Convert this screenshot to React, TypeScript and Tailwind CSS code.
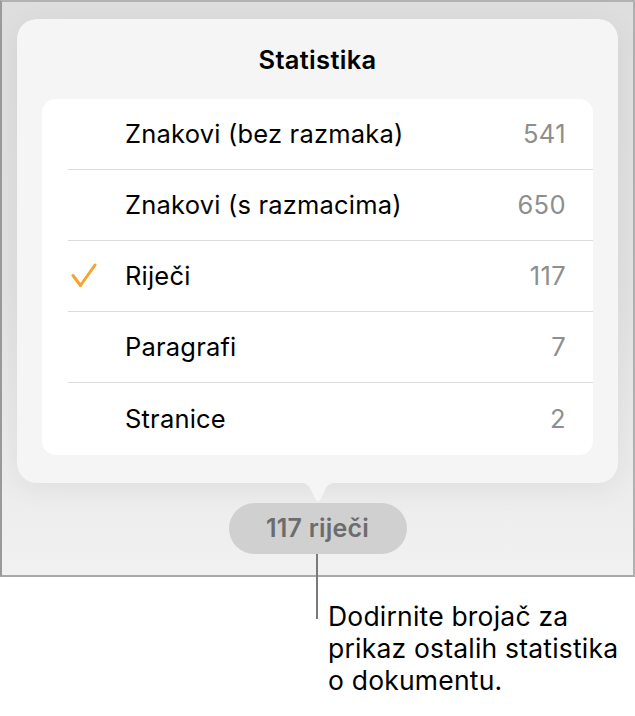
import React from 'react';

const rows = [
  { label: 'Znakovi (bez razmaka)', value: '541', checked: false },
  { label: 'Znakovi (s razmacima)', value: '650', checked: false },
  { label: 'Riječi', value: '117', checked: true },
  { label: 'Paragrafi', value: '7', checked: false },
  { label: 'Stranice', value: '2', checked: false },
];

function Check() {
  return (
    <svg width="28" height="26" viewBox="0 0 28 26" className="block">
      <path
        d="M3 12.5 L10.5 22.5 L25 2"
        fill="none"
        stroke="#f5a332"
        strokeWidth="3"
        strokeLinecap="round"
        strokeLinejoin="round"
      />
    </svg>
  );
}

export default function App() {
  return (
    <div className="relative w-[635px] h-[716px] bg-white font-['Inter','Liberation_Sans',sans-serif] text-black">
      {/* device frame */}
      <div className="w-[635px] h-[577px] border-t-2 border-t-[#b2b2b2] border-l-2 border-l-[#9a9a9a] border-r-2 border-r-[#b0b0b0] border-b-2 border-b-[#a8a8a8] bg-gradient-to-b from-[#dedede] via-[#e2e2e2] to-[#f1f1f1] flex flex-col items-center pt-[17px]">
        <div className="w-[601px] bg-[#f5f5f5] rounded-[20px] shadow-[0_6px_30px_rgba(0,0,0,0.06)] px-[25px] pt-[25px] pb-[28px] flex flex-col items-center">
          <div className="h-[32px] leading-[32px] text-[25.5px] font-semibold tracking-[0.3px]">Statistika</div>
          <div className="mt-[23px] w-full bg-white rounded-[14px] pl-[26px]">
            {rows.map((r, i) => (
              <div
                key={r.label}
                className={
                  'flex items-center pr-[27px] ' +
                  (i === 4 ? 'h-[72px]' : 'h-[71px] border-b border-[#dcdcdc]')
                }
              >
                <div className="w-[57px] pl-[2px]">{r.checked ? <Check /> : null}</div>
                <span className="flex-1 text-[25.5px] tracking-[0.2px]">{r.label}</span>
                <span className="text-[25.5px] tracking-[0.4px] text-[#8e8e8e]">{r.value}</span>
              </div>
            ))}
          </div>
        </div>
        {/* popover arrow */}
        <svg width="50" height="21" viewBox="0 0 50 21" className="block -mt-[1px]">
          <path d="M0 0 C11 0 13 1 17 6 L22.5 17.5 Q25 21 27.5 17.5 L33 6 C37 1 39 0 50 0 Z" fill="#f5f5f5" />
        </svg>
        <div className="w-[178px] h-[51px] rounded-full bg-[#d0d0d0] flex items-center justify-center text-[25px] font-semibold tracking-[0.2px] text-[#6c6c6c]">
          117 riječi
        </div>
      </div>

      {/* callout line */}
      <div className="absolute left-[316px] top-[554px] w-[2px] h-[65px] bg-[#7a7a7a]" />

      <div className="absolute left-[328px] top-[600px] text-[26.5px] leading-[32px] tracking-[0.2px] text-black">
        Dodirnite brojač za
        <br />
        prikaz ostalih statistika
        <br />o dokumentu.
      </div>
    </div>
  );
}
